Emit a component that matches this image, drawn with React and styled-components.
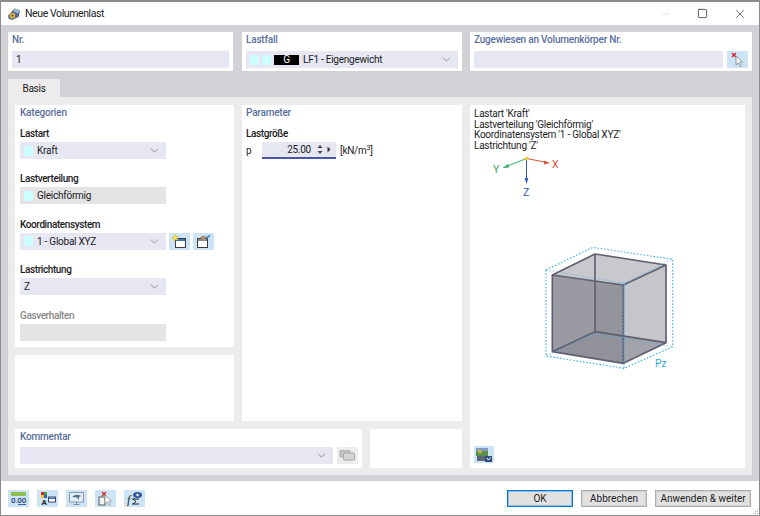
import React from "react";
import styled, { createGlobalStyle } from "styled-components";
import { ChevronDown, Minus, Square, X } from "lucide-react";

const GlobalStyle = createGlobalStyle`
  html, body {
    margin: 0;
    padding: 0;
    background: #fff;
  }
  body {
    font-family: Roboto, "Noto Sans", "Liberation Sans", sans-serif;
    font-size: 10px;
    letter-spacing: -0.25px;
    color: #1c1c24;
  }
`;

const Win = styled.div`
  width: 760px;
  height: 516px;
  box-sizing: border-box;
  border: 1px solid #8c8c8c;
  border-top-width: 2px;
  display: flex;
  flex-direction: column;
  background: #fff;
  overflow: hidden;
`;

const TitleBar = styled.div`
  height: 23px;
  flex: none;
  display: flex;
  align-items: center;
  padding-left: 6px;
  gap: 4px;
  font-size: 10.5px;
  letter-spacing: -0.4px;
  background: #fff;
`;

const WinControls = styled.div`
  margin-left: auto;
  display: flex;
  align-items: center;
  gap: 25px;
  padding-right: 12px;
  color: #222;
`;

const Body = styled.div`
  flex: 1;
  background: #d1d1d6;
  padding: 7px 7px 6px;
  display: flex;
  flex-direction: column;
`;

const TopRow = styled.div`
  display: grid;
  grid-template-columns: 226px 220px 282px;
  column-gap: 8px;
  height: 39px;
`;

const Card = styled.div`
  background: #fff;
  padding: ${(p) => p.$pad || "0 4px"};
  box-sizing: border-box;
  min-width: 0;
  display: flex;
  flex-direction: column;
`;

const NrCard = styled(Card)`
  margin-right: 1px;
`;

const CardTitle = styled.div`
  height: 15px;
  line-height: 15px;
  font-weight: 500;
  letter-spacing: -0.2px;
  color: #5b6f9f;
  white-space: nowrap;
  margin-bottom: ${(p) => p.$after || 0}px;
`;

const Input = styled.div`
  height: 17px;
  flex: ${(p) => (p.$grow ? 1 : "none")};
  width: ${(p) => (p.$w ? `${p.$w}px` : "auto")};
  background: ${(p) => (p.$off ? "#e4e4e4" : "#e6e7f2")};
  display: flex;
  align-items: center;
  padding: 0 4px;
  box-sizing: border-box;
  gap: 3px;
  white-space: nowrap;
`;

const Swatch = styled.span`
  width: 9px;
  height: 10px;
  background: #ccffff;
  flex: none;
  margin-right: ${(p) => p.$gap || 0}px;
`;

const GBadge = styled.span`
  width: 25px;
  height: 10px;
  background: #000;
  color: #fff;
  text-align: center;
  line-height: 10px;
  flex: none;
  margin-right: 1px;
`;

const Caret = styled(ChevronDown)`
  margin-left: auto;
  color: #666;
  flex: none;
  margin-right: 1px;
`;

const Row = styled.div`
  display: flex;
  align-items: center;
  gap: ${(p) => p.$gap || 4}px;
`;

const IconBtn = styled.div`
  width: ${(p) => p.$w || 21}px;
  height: 17px;
  flex: none;
  background: ${(p) => (p.$off ? "#ececec" : "#cde4f7")};
  display: flex;
  align-items: center;
  justify-content: center;
`;

const TabStrip = styled.div`
  height: 18px;
  margin-top: 8px;
  flex: none;
  display: flex;
`;

const Tab = styled.div`
  width: 52px;
  background: #ececec;
  text-align: center;
  line-height: 19px;
`;

const TabPanel = styled.div`
  flex: 1;
  background: #ececec;
  padding: 8px 7px 7px;
  display: grid;
  grid-template-columns: 219px 220px 275px;
  grid-template-rows: 242px 66px 39px;
  column-gap: 8px;
  row-gap: 8px;
`;

const Kategorien = styled(Card)`
  grid-column: 1;
  grid-row: 1;
  padding: 0 5px;
`;

const Blank = styled(Card)`
  grid-column: ${(p) => p.$col};
  grid-row: ${(p) => p.$row};
`;

const ParamCard = styled(Card)`
  grid-column: 2;
  grid-row: 1 / span 2;
`;

const Preview = styled(Card)`
  grid-column: 3;
  grid-row: 1 / span 3;
  padding: 4px 4px 5px;
`;

const BottomPair = styled.div`
  grid-column: 1 / span 2;
  grid-row: 3;
  display: grid;
  grid-template-columns: 347px 92px;
  column-gap: 8px;
`;

const Field = styled.div`
  height: 46px;
  display: flex;
  flex-direction: column;
`;

const FieldLabel = styled.label`
  height: 14px;
  margin-top: 7px;
  line-height: 14px;
  font-weight: 500;
  letter-spacing: -0.4px;
  color: ${(p) => (p.$off ? "#8a8a8a" : "#1c1c24")};
  margin-bottom: 1px;
`;

const Spin = styled.div`
  width: 74px;
  height: 17px;
  background: #e6e7f2;
  border-bottom: 2px solid #4a56a6;
  box-sizing: border-box;
  display: flex;
  align-items: center;
`;

const SpinValue = styled.span`
  width: 49px;
  text-align: right;
`;

const Spinner = styled.div`
  width: 25px;
  display: flex;
  align-items: center;
  justify-content: space-around;
  padding: 0 3px 0 4px;
  box-sizing: border-box;
`;

const SpinP = styled.span`
  width: 12px;
`;

const Sup = styled.sup`
  font-size: 7px;
  line-height: 0;
`;

const Info = styled.div`
  line-height: 10.7px;
  white-space: nowrap;
`;

const AxisSvg = styled.svg`
  display: block;
  margin: 0 0 0 16px;
`;

const CubeSvg = styled.svg`
  display: block;
  margin: 32px 0 0 46px;
`;

const PreviewBtn = styled(IconBtn)`
  margin-top: auto;
`;

const Footer = styled.div`
  height: 34px;
  flex: none;
  background: #fff;
  display: flex;
  align-items: center;
  padding: 0 8px 0 7px;
  position: relative;
`;

const FootIcons = styled.div`
  display: flex;
  gap: 8px;
`;

const FootBtns = styled.div`
  margin-left: auto;
  display: flex;
  gap: 8px;
`;

const Btn = styled.div`
  height: 17px;
  width: ${(p) => p.$w}px;
  box-sizing: border-box;
  background: #e1e1e1;
  border: ${(p) => (p.$primary ? "1px solid #0078d7" : "1px solid #adadad")};
  box-shadow: inset 0 0 0 1px ${(p) => (p.$primary ? "rgba(0,120,215,.35)" : "rgba(173,173,173,.3)")};
  text-align: center;
  line-height: 15px;
  letter-spacing: 0;
  white-space: nowrap;
`;

const Grip = styled.svg`
  position: absolute;
  right: 0;
  bottom: 0;
`;

const TitleIcon = () => (
  <svg width="14" height="14" viewBox="0 0 13 13">
    <path d="M1 8 L7 1.5 L12 3 L11 9 L5 12 L1.5 11 Z" fill="#4d6a8e" />
    <path d="M7 1.5 L12 3 L10 6 L6 4 Z" fill="#9fb7cf" />
    <circle cx="5" cy="8" r="2.6" fill="#e2b93b" />
    <circle cx="5" cy="8" r="1" fill="#5c5130" />
  </svg>
);

const PickIcon = () => (
  <svg width="17" height="15" viewBox="0 0 17 15">
    <path d="M3 1 L7 5 M7 1 L3 5" stroke="#d8232a" strokeWidth="1.4" />
    <path d="M7 4 L7 13 L9.2 11 L11 14.5 L12.6 13.6 L10.8 10.4 L13.5 10 Z" fill="#f4f4f4" stroke="#7d8790" strokeWidth="0.8" />
  </svg>
);

const NewIcon = () => (
  <svg width="17" height="15" viewBox="0 0 17 15">
    <rect x="4.5" y="4.5" width="10" height="9" fill="#fff" stroke="#3c3c3c" />
    <rect x="5" y="5" width="9" height="2" fill="#3f6fb5" />
    <path d="M4 0 L5 2.3 L7.4 2 L6 4 L7.2 6 L4.8 5.6 L3.4 7.4 L3 5 L.7 4.2 L3 3 Z" fill="#f7e34a" stroke="#c9b22a" strokeWidth=".4" />
  </svg>
);

const EditIcon = () => (
  <svg width="17" height="15" viewBox="0 0 17 15">
    <rect x="2.5" y="4.5" width="10" height="9" fill="#fff" stroke="#3c3c3c" />
    <rect x="3" y="5" width="9" height="2" fill="#8c8c8c" />
    <path d="M5 4 Q6 1 10 2 L12 3 L9 6 Z" fill="#b58e78" />
    <path d="M11 3 L15 .5 L15.5 2 L12 5 Z" fill="#4f86c6" />
  </svg>
);

const CommentIcon = () => (
  <svg width="17" height="13" viewBox="0 0 17 13">
    <rect x="1" y="1.5" width="10" height="6.5" rx="1" fill="#c2c2c2" stroke="#adadad" />
    <rect x="4.5" y="4" width="11" height="7" rx="1" fill="#d4d4d4" stroke="#a6a6a6" />
  </svg>
);

const ViewIcon = () => (
  <svg width="18" height="16" viewBox="0 0 18 16">
    <rect x="1" y="1" width="12" height="8" fill="#5f8f4c" />
    <rect x="1" y="1" width="12" height="3" fill="#7f9cc4" />
    <rect x="3" y="3" width="4" height="3" fill="#c2b04a" />
    <rect x="2" y="9" width="13" height="5" fill="#5c6675" />
    <path d="M10 9 L17 9 L17 15 L10 15 Z" fill="#324f82" />
    <path d="M12 11 L13.5 13 L15.5 10.5" stroke="#fff" fill="none" />
  </svg>
);

const ValuesIcon = () => (
  <svg width="19" height="15" viewBox="0 0 19 15">
    <rect x="2" y="1" width="15" height="4" fill="#8cc152" />
    <text x="9.5" y="12" textAnchor="middle" fontSize="8" fontWeight="500" fill="#2a3a66">0.00</text>
    <path d="M9 13.5 H17" stroke="#3f5cae" />
  </svg>
);

const ColorsIcon = () => (
  <svg width="19" height="15" viewBox="0 0 19 15">
    <rect x="3" y="1" width="3" height="3" fill="#d8232a" />
    <rect x="6" y="1" width="3" height="3" fill="#3aa34a" />
    <rect x="3" y="4" width="3" height="3" fill="#f2c230" />
    <rect x="6" y="4" width="3" height="3" fill="#2f5fc0" />
    <text x="6" y="14" textAnchor="middle" fontSize="8" fontWeight="700" fill="#222">A</text>
    <rect x="10.5" y="6" width="7" height="5" fill="#fff" stroke="#3c4a66" />
    <rect x="11" y="6.5" width="6" height="1.5" fill="#3f6fb5" />
  </svg>
);

const DisplayIcon = () => (
  <svg width="19" height="15" viewBox="0 0 19 15">
    <rect x="2.5" y="1.5" width="14" height="9.5" fill="#e4ecf3" stroke="#8b9aab" />
    <path d="M5 6 Q9 2 14 5 L12 6 L12 9 L10 6.5 Q7 6 5 6 Z" fill="#52748f" />
    <path d="M9.5 11 V13 M6.5 13.5 H12.5" stroke="#7d8b9a" />
  </svg>
);

const DeleteIcon = () => (
  <svg width="19" height="15" viewBox="0 0 19 15">
    <path d="M6 1 L10 5 M10 1 L6 5" stroke="#d8232a" strokeWidth="1.4" />
    <rect x="3" y="6" width="6" height="8" fill="#f2f2f2" stroke="#555" />
    <path d="M9 4 L9 13 L11 11 L13 14.5 L14.5 13.6 L12.7 10.4 L15.5 10 Z" fill="#f7f7f7" stroke="#8a949c" strokeWidth="0.8" />
  </svg>
);

const FormulaIcon = () => (
  <svg width="19" height="15" viewBox="0 0 19 15">
    <text x="2" y="13" fontSize="12" fontStyle="italic" fill="#222" fontFamily="Liberation Serif, serif">f</text>
    <path d="M7 8 H14 M7 13 H14 M8 8 L11 10.5 L8 13" stroke="#222" fill="none" />
    <ellipse cx="12.5" cy="4" rx="4.5" ry="3" fill="#33589e" />
    <circle cx="12.5" cy="4" r="1.2" fill="#fff" />
  </svg>
);

const Axes = () => (
  <AxisSvg width="70" height="46" viewBox="0 0 70 46">
    <path d="M36.5 6.5 L57 10.5" stroke="#d4573a" strokeWidth="1" />
    <path d="M60 11 L54 8.5 L54 12.5 Z" fill="#d4573a" />
    <path d="M36.5 6.5 L15 15" stroke="#3aa863" strokeWidth="1" />
    <path d="M12.5 16 L18 12 L19 15.5 Z" fill="#3aa863" />
    <path d="M36.5 6.5 L36.5 28" stroke="#2f5bc8" strokeWidth="1" />
    <path d="M36.5 32 L34.6 26 L38.4 26 Z" fill="#2f5bc8" />
    <circle cx="36.5" cy="6.5" r="1.8" fill="#f0d020" />
    <text x="62" y="16" fontSize="10.5" fill="#d4573a">X</text>
    <text x="3" y="21" fontSize="10.5" fill="#3aa863">Y</text>
    <text x="33" y="44" fontSize="10.5" fill="#2f5bc8">Z</text>
  </AxisSvg>
);

const Cube = () => (
  <CubeSvg width="170" height="150" viewBox="0 0 510 450">
    <path d="M225 72 L438 105 L438 338 L225 305 Z" fill="#bcbcc2" />
    <path d="M97 135 L225 72 L438 105 L310 165 Z" fill="#c9c9cd" />
    <path d="M310 165 L438 105 L438 338 L310 400 Z" fill="#c6c6ca" />
    <path d="M97 365 L225 305 L438 338 L310 400 Z" fill="#a3a3ac" />
    <path d="M97 135 L310 165 L310 400 L97 365 Z" fill="#8f8f99" fillOpacity="0.9" />
    <g stroke="#5f5f70" strokeWidth="5" fill="none" strokeLinejoin="round">
      <path d="M225 72 L225 305 M97 365 L225 305 L438 338" />
      <path d="M97 135 L225 72 L438 105 L310 165 Z" />
      <path d="M97 135 L97 365 L310 400 L310 165" />
      <path d="M438 105 L438 338 L310 400" />
    </g>
    <g stroke="#4cb3e6" strokeWidth="3.5" strokeDasharray="5 5" fill="none">
      <path d="M78 120 L218 52 L458 88" />
      <path d="M78 120 L78 378 L312 415 L458 350 L458 88" />
      <path d="M312 160 L312 415" />
      <path d="M78 120 L312 160 L458 88 M78 378 L218 312 L458 350" opacity="0.55" />
    </g>
    <text x="405" y="412" fontSize="31" fill="#35a8e0">Pz</text>
  </CubeSvg>
);

export default function App() {
  return (
    <>
      <GlobalStyle />
      <Win>
        <TitleBar>
          <TitleIcon />
          <span>Neue Volumenlast</span>
          <WinControls>
            <Minus size={12} color="#c8c8c8" strokeWidth={1} />
            <Square size={11} strokeWidth={1.6} />
            <X size={14} strokeWidth={1.1} />
          </WinControls>
        </TitleBar>
        <Body>
          <TopRow>
            <NrCard>
              <CardTitle $after={4}>Nr.</CardTitle>
              <Input>1</Input>
            </NrCard>
            <Card>
              <CardTitle $after={4}>Lastfall</CardTitle>
              <Input>
                <Swatch />
                <Swatch />
                <GBadge>G</GBadge>
                LF1 - Eigengewicht
                <Caret size={13} strokeWidth={1.2} />
              </Input>
            </Card>
            <Card>
              <CardTitle $after={4}>Zugewiesen an Volumenkörper Nr.</CardTitle>
              <Row>
                <Input $grow />
                <IconBtn>
                  <PickIcon />
                </IconBtn>
              </Row>
            </Card>
          </TopRow>
          <TabStrip>
            <Tab>Basis</Tab>
          </TabStrip>
          <TabPanel>
            <Kategorien>
              <CardTitle>Kategorien</CardTitle>
              <Field>
                <FieldLabel>Lastart</FieldLabel>
                <Input $w={146}>
                  <Swatch $gap={1} />
                  Kraft
                  <Caret size={13} strokeWidth={1.2} />
                </Input>
              </Field>
              <Field>
                <FieldLabel>Lastverteilung</FieldLabel>
                <Input $w={146} $off>
                  <Swatch $gap={1} />
                  Gleichförmig
                </Input>
              </Field>
              <Field>
                <FieldLabel>Koordinatensystem</FieldLabel>
                <Row $gap={3}>
                  <Input $w={146}>
                    <Swatch $gap={1} />
                    1 - Global XYZ
                    <Caret size={13} strokeWidth={1.2} />
                  </Input>
                  <IconBtn>
                    <NewIcon />
                  </IconBtn>
                  <IconBtn>
                    <EditIcon />
                  </IconBtn>
                </Row>
              </Field>
              <Field>
                <FieldLabel>Lastrichtung</FieldLabel>
                <Input $w={146}>
                  Z
                  <Caret size={13} strokeWidth={1.2} />
                </Input>
              </Field>
              <Field>
                <FieldLabel $off>Gasverhalten</FieldLabel>
                <Input $w={146} $off />
              </Field>
            </Kategorien>
            <Blank $col={1} $row={2} />
            <ParamCard>
              <CardTitle>Parameter</CardTitle>
              <FieldLabel>Lastgröße</FieldLabel>
              <Row $gap={4}>
                <SpinP>p</SpinP>
                <Spin>
                  <SpinValue>25.00</SpinValue>
                  <Spinner>
                    <svg width="6" height="11" viewBox="0 0 6 11">
                      <path d="M3 1 L5.5 4 H.5 Z M3 10 L5.5 7 H.5 Z" fill="#444" />
                    </svg>
                    <svg width="4" height="7" viewBox="0 0 4 7">
                      <path d="M.5 .5 L3.5 3.5 L.5 6.5 Z" fill="#333" />
                    </svg>
                  </Spinner>
                </Spin>
                <span>
                  [kN/m<Sup>3</Sup>]
                </span>
              </Row>
            </ParamCard>
            <Preview>
              <Info>Lastart 'Kraft'</Info>
              <Info>Lastverteilung 'Gleichförmig'</Info>
              <Info>Koordinatensystem '1 - Global XYZ'</Info>
              <Info>Lastrichtung 'Z'</Info>
              <Axes />
              <Cube />
              <PreviewBtn $w={20}>
                <ViewIcon />
              </PreviewBtn>
            </Preview>
            <BottomPair>
              <Card $pad="0 4px 0 5px">
                <CardTitle $after={3}>Kommentar</CardTitle>
                <Row $gap={4}>
                  <Input $grow>
                    <Caret size={13} strokeWidth={1.2} />
                  </Input>
                  <IconBtn $off>
                    <CommentIcon />
                  </IconBtn>
                </Row>
              </Card>
              <Card />
            </BottomPair>
          </TabPanel>
        </Body>
        <Footer>
          <FootIcons>
            <IconBtn><ValuesIcon /></IconBtn>
            <IconBtn><ColorsIcon /></IconBtn>
            <IconBtn><DisplayIcon /></IconBtn>
            <IconBtn><DeleteIcon /></IconBtn>
            <IconBtn><FormulaIcon /></IconBtn>
          </FootIcons>
          <FootBtns>
            <Btn $w={66} $primary>OK</Btn>
            <Btn $w={66}>Abbrechen</Btn>
            <Btn $w={96}>Anwenden &amp; weiter</Btn>
          </FootBtns>
          <Grip width="7" height="7" viewBox="0 0 7 7">
            <path d="M5 1h1v1H5zM3 3h1v1H3zM5 3h1v1H5zM1 5h1v1H1zM3 5h1v1H3zM5 5h1v1H5z" fill="#aaa" />
          </Grip>
        </Footer>
      </Win>
    </>
  );
}
